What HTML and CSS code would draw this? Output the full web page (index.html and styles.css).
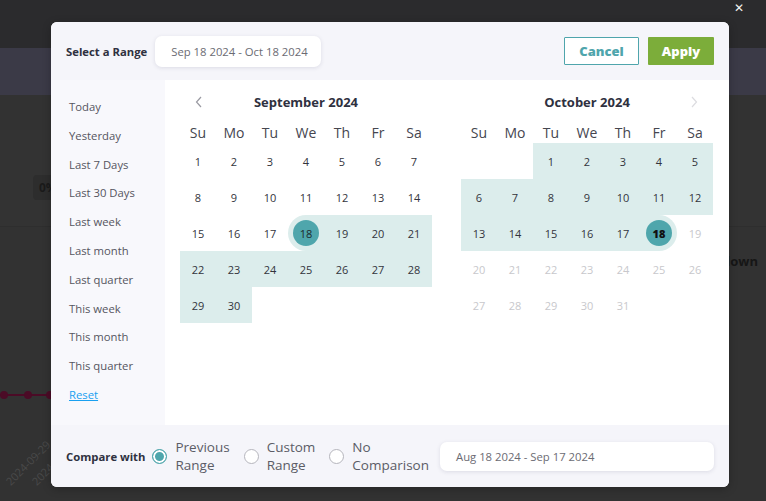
FILE: index.html
```html
<!DOCTYPE html>
<html>
<head>
<meta charset="utf-8">
<link rel="stylesheet" href="styles.css">
</head>
<body>
<div class="page">
  <div class="pg-top"></div>
  <div class="pg-nav"></div>
  <div class="pg-sub"></div>
  <div class="pg-stats"><span class="pg-badge">0%</span></div>
  <div class="pg-chart">
    <div class="pg-line"><span class="dot"></span><span class="dot"></span><span class="dot"></span></div>
    <div class="pg-axis"><span>2024-09-29</span><span>2024-09-30</span><span>2024-10-01</span><span>2024-10-02</span><span>2024-10-03</span><span>2024-10-04</span><span>2024-10-05</span><span>2024-10-06</span><span>2024-10-07</span></div>
  </div>
  <div class="pg-right"><span>Breakdown</span></div>
</div>

<div class="overlay">
  <span class="close">&#x2715;</span>
  <div class="modal">
    <header class="mhead">
      <span class="lbl">Select a Range</span>
      <div class="field">Sep 18 2024 - Oct 18 2024</div>
      <div class="spacer"></div>
      <button class="btn cancel">Cancel</button>
      <button class="btn apply">Apply</button>
    </header>
    <div class="mbody">
      <ul class="presets">
        <li>Today</li>
        <li>Yesterday</li>
        <li>Last 7 Days</li>
        <li>Last 30 Days</li>
        <li>Last week</li>
        <li>Last month</li>
        <li>Last quarter</li>
        <li>This week</li>
        <li>This month</li>
        <li>This quarter</li>
        <li class="reset">Reset</li>
      </ul>
      <div class="cals">
        <div class="cal">
          <div class="ctitle">
            <svg class="nav" width="10" height="12" viewBox="0 0 10 12"><path d="M7 1 L2.5 6 L7 11" fill="none" stroke="#9a9aa2" stroke-width="1.2"/></svg>
            <span>September 2024</span>
            <span class="nav"></span>
          </div>
          <div class="grid dow"><span>Su</span><span>Mo</span><span>Tu</span><span>We</span><span>Th</span><span>Fr</span><span>Sa</span></div>
          <div class="grid days">
            <span>1</span><span>2</span><span>3</span><span>4</span><span>5</span><span>6</span><span>7</span>
            <span>8</span><span>9</span><span>10</span><span>11</span><span>12</span><span>13</span><span>14</span>
            <span>15</span><span>16</span><span>17</span><span class="in start"><b class="sel">18</b></span><span class="in">19</span><span class="in">20</span><span class="in">21</span>
            <span class="in">22</span><span class="in">23</span><span class="in">24</span><span class="in">25</span><span class="in">26</span><span class="in">27</span><span class="in">28</span>
            <span class="in">29</span><span class="in">30</span>
          </div>
        </div>
        <div class="cal">
          <div class="ctitle">
            <span class="nav"></span>
            <span>October 2024</span>
            <svg class="nav" width="10" height="12" viewBox="0 0 10 12"><path d="M3 1 L7.5 6 L3 11" fill="none" stroke="#dcdce0" stroke-width="1.2"/></svg>
          </div>
          <div class="grid dow"><span>Su</span><span>Mo</span><span>Tu</span><span>We</span><span>Th</span><span>Fr</span><span>Sa</span></div>
          <div class="grid days">
            <span></span><span></span><span class="in">1</span><span class="in">2</span><span class="in">3</span><span class="in">4</span><span class="in">5</span>
            <span class="in">6</span><span class="in">7</span><span class="in">8</span><span class="in">9</span><span class="in">10</span><span class="in">11</span><span class="in">12</span>
            <span class="in">13</span><span class="in">14</span><span class="in">15</span><span class="in">16</span><span class="in">17</span><span class="in end"><b class="sel bold">18</b></span><span class="off">19</span>
            <span class="off">20</span><span class="off">21</span><span class="off">22</span><span class="off">23</span><span class="off">24</span><span class="off">25</span><span class="off">26</span>
            <span class="off">27</span><span class="off">28</span><span class="off">29</span><span class="off">30</span><span class="off">31</span>
          </div>
        </div>
      </div>
    </div>
    <footer class="mfoot">
      <span class="lbl">Compare with</span>
      <label class="radio"><span class="dotr on"></span><span class="rtext">Previous<br>Range</span></label>
      <label class="radio"><span class="dotr"></span><span class="rtext">Custom<br>Range</span></label>
      <label class="radio last"><span class="dotr"></span><span class="rtext">No<br>Comparison</span></label>
      <div class="field wide">Aug 18 2024 - Sep 17 2024</div>
    </footer>
  </div>
</div>
</body>
</html>
```

FILE: styles.css
```css
* { box-sizing: border-box; }
html, body { margin: 0; padding: 0; }
body {
  width: 766px;
  height: 501px;
  overflow: hidden;
  background: #333333;
  font-family: "Open Sans", "Liberation Sans", sans-serif;
  position: relative;
}

/* dimmed page behind the dialog */
.page { width: 766px; height: 501px; display: flex; flex-direction: column; }
.pg-top { height: 48px; background: #2b2b2d; }
.pg-nav { height: 47px; background: #3b3a47; }
.pg-sub { height: 35px; background: #323232; }
.pg-stats { height: 96px; background: #333333; padding: 45px 0 0 33px; }
.pg-badge { display: inline-block; background: #2d2d2d; color: #1a1a1a; font-weight: 700; font-size: 12px; padding: 4px 6px; border-radius: 4px; }
.pg-chart { flex: 1; background: #323232; border-top: 1px solid #2e2e2e; position: relative; }
.pg-line { position: absolute; left: 0; top: 167px; width: 60px; height: 2px; background: #4b0b26; }
.pg-line .dot { position: absolute; top: -3px; width: 8px; height: 8px; border-radius: 50%; background: #4b0b26; }
.pg-line .dot:nth-child(1) { left: 0; }
.pg-line .dot:nth-child(2) { left: 24px; }
.pg-line .dot:nth-child(3) { left: 46px; }
.pg-axis { position: absolute; left: 4px; top: 240px; display: flex; gap: 2px; }
.pg-axis span { display: block; transform: rotate(-45deg); color: #4a4a4a; font-size: 11px; width: 24px; white-space: nowrap; }
.pg-right {
  position: absolute; left: 729px; right: 0; top: 252px;
  overflow: hidden;
  display: flex; justify-content: flex-end;
  padding-right: 8px;
  color: #161616; font-weight: 700; font-size: 13px; white-space: nowrap;
}
.pg-right span { flex: none; }

.overlay { position: absolute; inset: 0; }
.close { position: absolute; right: 22px; top: 1px; color: #f2f2f2; font-size: 12px; line-height: 14px; }

.modal {
  position: absolute;
  left: 51px; top: 22px;
  width: 678px; height: 465px;
  border-radius: 6px;
  overflow: hidden;
  background: #ffffff;
  display: flex; flex-direction: column;
  box-shadow: 0 2px 8px rgba(0,0,0,0.25);
}

.lbl { font-size: 11.3px; font-weight: 700; color: #2f3140; white-space: nowrap; }

.mhead {
  height: 58px;
  background: #f5f5fa;
  display: flex; align-items: center;
  padding: 0 15px 0 15px;
}
.mhead .lbl { margin-right: 8px; }
.field {
  background: #ffffff;
  border-radius: 7px;
  box-shadow: 0 1px 4px rgba(40,40,80,0.12);
  height: 31px;
  display: flex; align-items: center;
  padding: 0 14px 0 16px;
  font-size: 11.3px;
  color: #6b6b73;
  width: 166px;
  white-space: nowrap;
  flex: none;
}
.spacer { flex: 1; }
.btn {
  height: 28px;
  font-family: inherit;
  font-weight: 800;
  font-size: 13px;
  border-radius: 1px;
  cursor: pointer;
}
.cancel { width: 75px; background: #ffffff; color: #4fa5ac; border: 1px solid #4fa5ac; margin-right: 9px; }
.apply { width: 66px; background: #7cad3a; color: #ffffff; border: none; }

.mbody { flex: 1; display: flex; }
.presets {
  list-style: none; margin: 0;
  width: 114px;
  background: #f8f8fc;
  padding: 13px 0 0 18px;
}
.presets li { height: 28.8px; line-height: 28.8px; font-size: 11.3px; color: #555560; }
.presets .reset { color: #1aa0f0; text-decoration: underline; }

.cals { flex: 1; display: flex; gap: 29px; padding: 12px 16px 0 15px; background: #fff; }
.cal { width: 252px; }
.ctitle { height: 20px; display: flex; align-items: center; justify-content: space-between; padding: 0 14px 0 14px; font-size: 13px; font-weight: 700; color: #2f3140; margin-bottom: 11px; }
.ctitle .nav { width: 10px; height: 12px; display: block; }
.grid { display: grid; grid-template-columns: repeat(7, 36px); }
.dow { height: 20px; }
.dow span { text-align: center; font-size: 14px; color: #45464f; line-height: 20px; }
.days { grid-auto-rows: 36px; }
.days span { display: flex; align-items: center; justify-content: center; font-size: 11px; color: #33343c; }
.days .in { background: #dcedec; }
.days .start { border-radius: 18px 0 0 18px; }
.days .end { border-radius: 0 18px 18px 0; }
.days .off { color: #c8c8cc; }
.sel {
  width: 26px; height: 26px; border-radius: 50%;
  background: #4fa6ac;
  display: flex; align-items: center; justify-content: center;
  font-weight: 400; color: #1d2a2c;
}
.sel.bold { font-weight: 800; color: #111; }

.mfoot {
  height: 62px;
  background: #f5f5fa;
  display: flex; align-items: center;
  padding: 0 15px;
}
.mfoot .lbl { margin-right: 7px; }
.radio { display: flex; align-items: center; margin-right: 14px; flex: none; }
.radio.last { margin-right: 0; }
.dotr {
  width: 15px; height: 15px; border-radius: 50%;
  border: 1px solid #b5b5bc; background: #fff;
  margin-right: 8px; flex: none;
}
.dotr.on { border: 1px solid #4fa6ac; background: #4fa6ac; box-shadow: inset 0 0 0 2px #fff; }
.rtext { font-size: 13.5px; line-height: 18px; color: #5b5c66; }
.field.wide { width: 274px; height: 29px; margin-left: auto; }
```
